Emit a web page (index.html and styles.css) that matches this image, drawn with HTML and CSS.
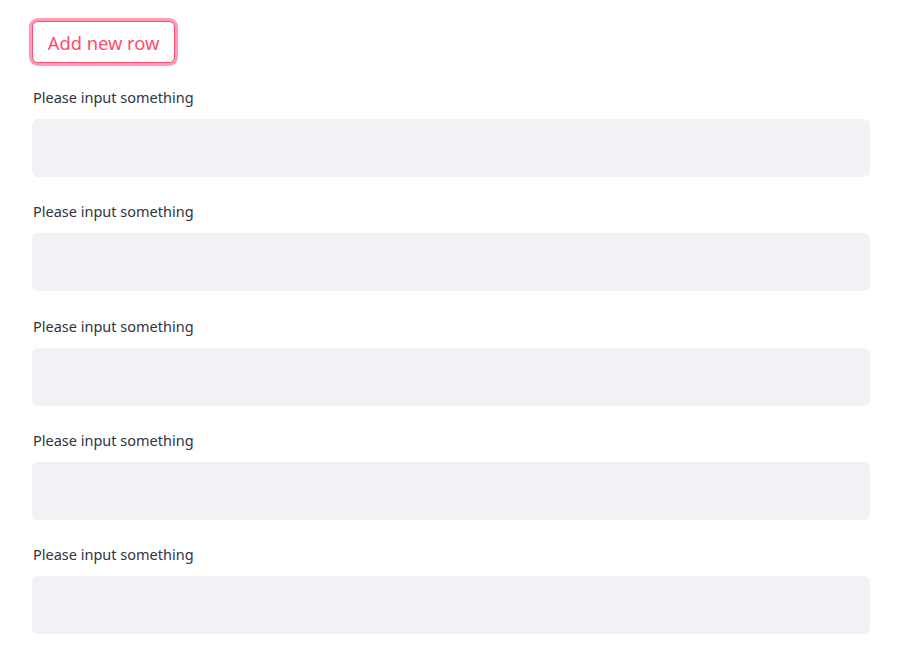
FILE: index.html
```html
<!DOCTYPE html>
<html>
<head>
<meta charset="utf-8">
<link rel="stylesheet" href="styles.css">
</head>
<body>
<main class="page">
  <button class="btn">Add new row</button>
  <div class="rows">
    <div class="row"><label class="label">Please input something</label><div class="input"></div></div>
    <div class="row"><label class="label">Please input something</label><div class="input"></div></div>
    <div class="row"><label class="label">Please input something</label><div class="input"></div></div>
    <div class="row"><label class="label">Please input something</label><div class="input"></div></div>
    <div class="row"><label class="label">Please input something</label><div class="input"></div></div>
  </div>
</main>
</body>
</html>
```
FILE: styles.css
```css
html, body { margin: 0; padding: 0; background: #fff; }
.page {
  padding: 21px 42px 0 32px;
  font-family: "Noto Sans", "Open Sans", sans-serif;
  color: #31333f;
}
.btn {
  display: block;
  box-sizing: border-box;
  width: 143px;
  height: 42px;
  background: #fff;
  border: 1px solid #ff4b6e;
  border-radius: 6px;
  box-shadow: 0 0 0 3px rgba(255, 90, 130, 0.6);
  color: #ff4b6e;
  font-family: inherit;
  font-size: 18.3px;
  padding: 0;
}
.rows { display: flex; flex-direction: column; gap: 25.3px; margin-top: 25px; }
.row { display: flex; flex-direction: column; }
.label { font-size: 14.5px; line-height: 18px; margin-bottom: 13px; padding-left: 1px; }
.input { height: 58px; background: #f0f2f6; border-radius: 6px; }
```
